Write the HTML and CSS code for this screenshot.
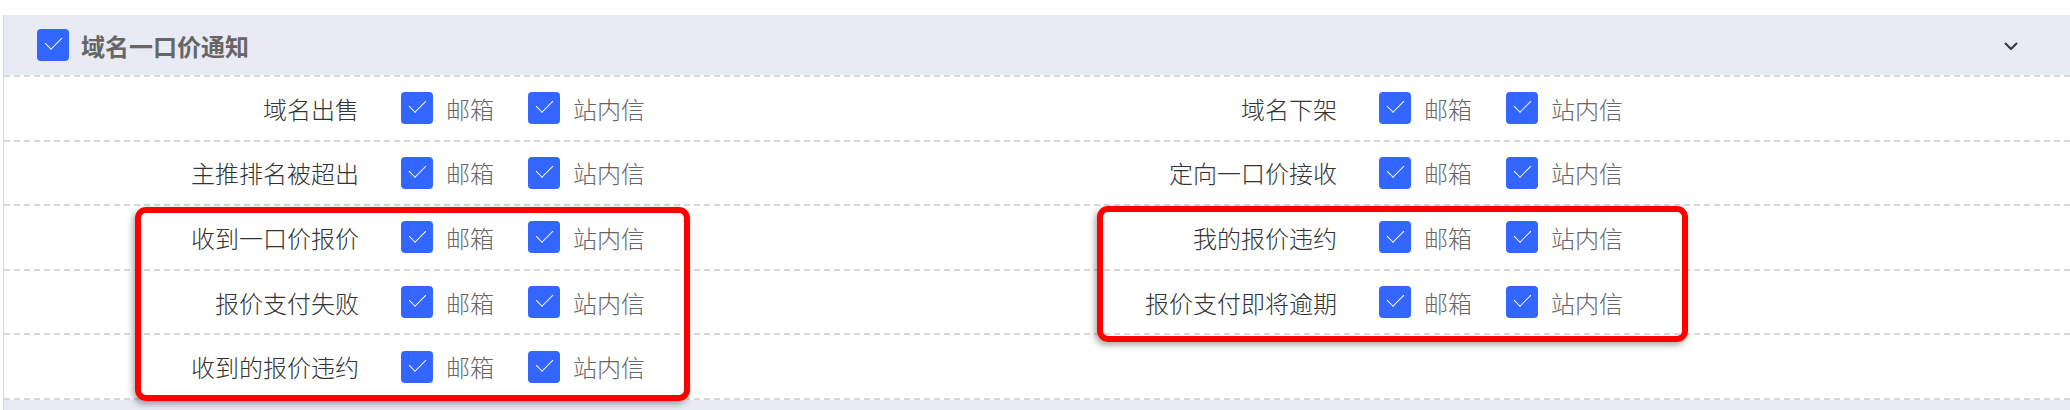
FILE: index.html
```html
<!DOCTYPE html>
<html lang="zh-CN">
<head>
    <meta charset="UTF-8">
    <meta name="viewport" content="width=device-width, initial-scale=1.0">
    <title>通知设置</title>
    <link rel="stylesheet" href="styles.css">
</head>
<body>
    <div class="panel">
        <div class="panel-head">
            <label class="head-check">
                <span class="box"></span>
                <span class="head-title">域名一口价通知</span>
            </label>
            <svg class="arrow" width="14" height="8" viewBox="0 0 14 8">
                <polyline points="1,1 7,7 13,1" fill="none" stroke="#333" stroke-width="2"/>
            </svg>
        </div>

        <div class="panel-body">
            <div class="row">
                <div class="field">
                    <span class="field-label">域名出售</span>
                    <span class="opt"><span class="box"></span>邮箱</span>
                    <span class="opt"><span class="box"></span>站内信</span>
                </div>
                <div class="field">
                    <span class="field-label">域名下架</span>
                    <span class="opt"><span class="box"></span>邮箱</span>
                    <span class="opt"><span class="box"></span>站内信</span>
                </div>
            </div>
            <div class="row">
                <div class="field">
                    <span class="field-label">主推排名被超出</span>
                    <span class="opt"><span class="box"></span>邮箱</span>
                    <span class="opt"><span class="box"></span>站内信</span>
                </div>
                <div class="field">
                    <span class="field-label">定向一口价接收</span>
                    <span class="opt"><span class="box"></span>邮箱</span>
                    <span class="opt"><span class="box"></span>站内信</span>
                </div>
            </div>
            <div class="row">
                <div class="field">
                    <span class="field-label">收到一口价报价</span>
                    <span class="opt"><span class="box"></span>邮箱</span>
                    <span class="opt"><span class="box"></span>站内信</span>
                </div>
                <div class="field">
                    <span class="field-label">我的报价违约</span>
                    <span class="opt"><span class="box"></span>邮箱</span>
                    <span class="opt"><span class="box"></span>站内信</span>
                </div>
            </div>
            <div class="row">
                <div class="field">
                    <span class="field-label">报价支付失败</span>
                    <span class="opt"><span class="box"></span>邮箱</span>
                    <span class="opt"><span class="box"></span>站内信</span>
                </div>
                <div class="field">
                    <span class="field-label">报价支付即将逾期</span>
                    <span class="opt"><span class="box"></span>邮箱</span>
                    <span class="opt"><span class="box"></span>站内信</span>
                </div>
            </div>
            <div class="row">
                <div class="field">
                    <span class="field-label">收到的报价违约</span>
                    <span class="opt"><span class="box"></span>邮箱</span>
                    <span class="opt"><span class="box"></span>站内信</span>
                </div>
            </div>

            <!-- highlight frames -->
            <div class="mark mark-left"></div>
            <div class="mark mark-right"></div>
        </div>

        <div class="panel-head next-head"></div>
    </div>
</body>
</html>
```

FILE: styles.css
```css
body {
    margin: 0;
    padding-top: 15px;
    background: #fff;
    font-family: "Noto Sans CJK SC", "Noto Sans", sans-serif;
    overflow: hidden;
}

.panel {
    margin-left: 3px;
    border-left: 1px solid #cad8f0;
}

.panel-head {
    display: flex;
    align-items: center;
    height: 60px;
    padding: 0 52px 0 33px;
    background: #e8ebf4;
}

.head-check {
    display: flex;
    align-items: center;
    gap: 12px;
}

.head-title {
    font-size: 24px;
    font-weight: 700;
    color: #666;
}

.arrow {
    margin-left: auto;
    margin-top: 2px;
}

.box {
    position: relative;
    flex: none;
    width: 32px;
    height: 32px;
    border-radius: 4px;
    background: #3366ff;
}

.box::after {
    content: "";
    position: absolute;
    left: 11.5px;
    top: 4.2px;
    width: 9px;
    height: 16px;
    box-sizing: border-box;
    border-right: 1.6px solid #fff;
    border-bottom: 1.6px solid #fff;
    transform: rotate(45deg);
}

.panel-body {
    position: relative;
    padding-bottom: 2px;
    background:
        repeating-linear-gradient(to right, #d8d8d8 0 6px, transparent 6px 10px) left bottom / 100% 2px no-repeat;
}

.row {
    display: grid;
    grid-template-columns: 978px 978px 1fr;
    height: 64.6px;
    background:
        repeating-linear-gradient(to right, #d8d8d8 0 6px, transparent 6px 10px) left top / 100% 2px no-repeat;
}

.field {
    display: flex;
    align-items: center;
    padding-top: 2px;
    font-size: 24px;
    font-weight: 300;
}

.field-label {
    width: 355px;
    margin-right: 42px;
    text-align: right;
    color: #333;
}

.opt {
    display: flex;
    align-items: center;
    gap: 13px;
    margin-right: 34px;
    color: #666;
}

.mark {
    position: absolute;
    box-sizing: border-box;
    border: 6px solid #ff0000;
    border-radius: 11px;
    box-shadow: -2px 3px 6px rgba(0, 0, 0, 0.35);
}

.mark-left {
    left: 131px;
    top: 132px;
    width: 555px;
    height: 194px;
}

.mark-right {
    left: 1093px;
    top: 131px;
    width: 591px;
    height: 136px;
}

.next-head {
    height: 40px;
}
```
